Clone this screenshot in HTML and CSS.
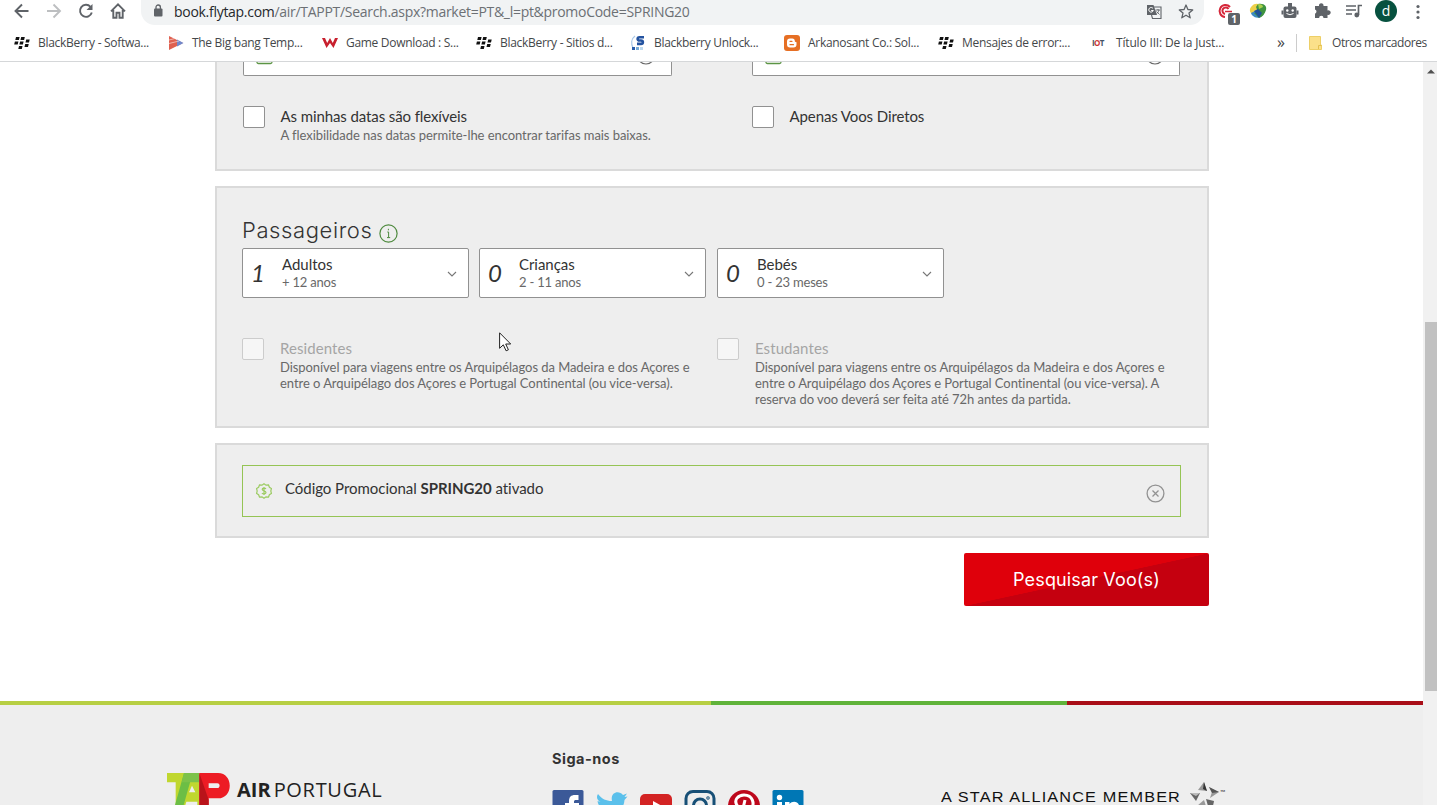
FILE: index.html
```html
<!DOCTYPE html>
<html lang="pt">
<head>
<meta charset="utf-8">
<title>TAP Air Portugal</title>
<link rel="stylesheet" href="styles.css">
</head>
<body>
<svg width="0" height="0" class="defs">
  <symbol id="bb" viewBox="0 0 16 12"><path d="M2 0h3.600l-.7 3H1.300zM7.200 0h3.600l-.7 3H6.500zM.9 4.500h3.500l-.7 3H.2zM6.100 4.500h3.500l-.7 3H5.400zM12.200 2.400h3.500l-.7 3h-3.500zM5 9h3.500l-.7 3H4.300zM11.200 7h3.500l-.7 3h-3.500z" fill="#111"/></symbol>
  <symbol id="chev" viewBox="0 0 10 6"><path d="M1 1l4 4 4-4" fill="none" stroke="#777" stroke-width="1.100"/></symbol>
</svg>
<header class="chrome">
  <div class="toolbar">
    <svg class="nav" width="128" height="24" viewBox="0 0 128 24" fill="none" stroke="#5f6368" stroke-width="1.900">
      <path d="M29 11H16M22.500 4.500L16 11l6.500 6.500" transform="translate(-.5)"/>
      <path d="M47 11h13M53.500 4.500L60 11l-6.500 6.500" stroke="#bdbfc1"/>
      <path d="M90.500 6.800A6 6 0 1 0 91.800 12.500"/><path d="M92.500 4v6h-6z" fill="#5f6368" stroke="none"/>
      <path d="M111 11.300l7-7 7 7M113.300 10v7.700h3.200v-5h3v5h3.200V10"/>
    </svg>
    <div class="omnibox">
      <svg class="lock" width="10" height="13" viewBox="0 0 10 13"><rect x="1" y="4.500" width="8.500" height="8" rx="1" fill="#5f6368"/><path d="M3 5V3.200a2.200 2.200 0 0 1 4.400 0V5" fill="none" stroke="#5f6368" stroke-width="1.300"/></svg>
      <span class="url"><b>book.flytap.com</b>/air/TAPPT/Search.aspx?market=PT&amp;_l=pt&amp;promoCode=SPRING20</span>
      <svg class="boxicons" width="48" height="18" viewBox="0 0 48 18">
        <path d="M1 3h6.500l3.500 10H1z" fill="#5f6368"/><path d="M8 5h7v11.500H6.500L5.500 13" fill="none" stroke="#5f6368" stroke-width="1.100"/>
        <path d="M7 6.500A2.300 2.300 0 1 0 7.300 8.500H5.200" fill="none" stroke="#fff"/><path d="M9.500 8h4.500M12 7v1M13 8c-.5 2-1.500 3-2.500 3.800M10.500 9.500l3 3" fill="none" stroke="#5f6368" stroke-width=".9"/>
        <path d="M40 3l1.900 4.500 4.800.4-3.700 3.200 1.200 4.700-4.200-2.600-4.200 2.600 1.200-4.700-3.700-3.200 4.800-.4z" fill="none" stroke="#5f6368" stroke-width="1.300" stroke-linejoin="round"/>
      </svg>
    </div>
    <div class="extensions">
      <div class="ext"><svg width="18" height="18" viewBox="0 0 18 18" fill="none" stroke="#d5273a" stroke-width="2"><path d="M13 5A6 6 0 1 0 8 15M11.500 7A3.300 3.300 0 1 0 8 12"/><path d="M8 9.500h7" stroke-width="1.500"/></svg><span class="count">1</span></div>
      <svg width="18" height="18" viewBox="0 0 18 18"><circle cx="8.500" cy="9" r="6.800" fill="#3a8ac2"/><path d="M3 4c3-4 9-2 9 1L8 8l-6 3C0 8 1 6 3 4z" fill="#eed04a"/><path d="M9 2c7-1 9 3 8 6-1 4-4 7-7 8l-5-5 4-1-2-5z" fill="#3f9340"/><path d="M5 9l4-2 4 4-3 5z" fill="#225398"/><path d="M9 2c3 0 5 1 5 3l-4 2z" fill="#a9cf4b"/></svg>
      <svg width="18" height="18" viewBox="0 0 18 18"><path d="M9 1v4" stroke="#5f6368" stroke-width="4"/><rect x="2.500" y="4.500" width="13" height="11.500" rx="2" fill="#5f6368"/><path d="M1.500 8.500v4M16.500 8.500v4" stroke="#5f6368" stroke-width="2"/><circle cx="6.300" cy="8.500" r="1.200" fill="#fff"/><circle cx="11.700" cy="8.500" r="1.200" fill="#fff"/><path d="M5.500 11.500q3.500 2.500 7 0" stroke="#fff" fill="none"/></svg>
      <svg width="18" height="18" viewBox="0 0 18 18"><path d="M2 4h4a2.300 2.300 0 1 1 4.500 0h4v4.500a2.300 2.300 0 1 1 0 4.200V16h-4a2.200 2.200 0 0 0-4.400 0H2v-4.300a2.300 2.300 0 0 0 0-4.300z" fill="#5f6368"/></svg>
      <svg width="18" height="18" viewBox="0 0 18 18" fill="none" stroke="#5f6368" stroke-width="1.700"><path d="M1 4h10M1 8h10M1 12h6M17 3.500h-3.500V13"/><circle cx="11.800" cy="13" r="1.600" fill="#5f6368"/></svg>
      <span class="avatar">d</span>
      <svg width="4" height="16" viewBox="0 0 4 16" fill="#5f6368"><circle cx="2" cy="2.500" r="1.600"/><circle cx="2" cy="8" r="1.600"/><circle cx="2" cy="13.500" r="1.600"/></svg>
    </div>
  </div>
  <nav class="bookmarks">
    <a class="bm"><svg width="16" height="12"><use href="#bb"/></svg>BlackBerry - Softwa...</a>
    <a class="bm"><svg width="16" height="16" viewBox="0 0 16 16"><path d="M1 1l14 7-14 7z" fill="#df6050"/><path d="M9 4.500l6.500 3.500L9 11.500z" fill="#7089cc"/><path d="M1 5l6-1.500M1 8.500L11 6" stroke="#fbd9d2" stroke-width=".7"/></svg>The Big bang Temp...</a>
    <a class="bm"><svg width="16" height="12" viewBox="0 0 16 12"><path d="M0 1h3l2.200 5L8 1l2.800 5L13 1h3l-4.500 10L8 6l-3.500 5z" fill="#c8202e"/></svg>Game Download : S...</a>
    <a class="bm"><svg width="16" height="12"><use href="#bb"/></svg>BlackBerry - Sitios d...</a>
    <a class="bm"><svg width="16" height="16" viewBox="0 0 16 16"><path d="M5 1C1 4 1 9 3 13" fill="none" stroke="#a9c8e8" stroke-width="1.300"/><path d="M14 2.300H9.500c-2.500 0-2.500 3.200 0 3.200h1.500c2.500 0 2.500 3.400 0 3.400H7" fill="none" stroke="#2453a0" stroke-width="2.600"/><path d="M2 12h3v3H2z" fill="#285caa"/><path d="M6 12h3v3H6z" fill="#75aad8"/><path d="M10 12h3v3h-3z" fill="#bedaf0"/></svg>Blackberry Unlock...</a>
    <a class="bm"><svg width="16" height="16" viewBox="0 0 16 16"><rect width="16" height="16" rx="3" fill="#e66f24"/><path d="M6 3.500h2.300a2.500 2.500 0 0 1 2.500 2.500c0 .9.300 1 1.700 1.200v2.300a3 3 0 0 1-3 3H6a3 3 0 0 1-3-3v-3a3 3 0 0 1 3-3z" fill="#fff"/><path d="M6 6.300h2M6 9.700h3.500" stroke="#e66f24" stroke-width="1.200" stroke-linecap="round"/></svg>Arkanosant Co.: Sol...</a>
    <a class="bm"><svg width="16" height="12"><use href="#bb"/></svg>Mensajes de error:...</a>
    <a class="bm last"><span class="iot"><i>I</i>O<i>T</i></span>Título III: De la Just...</a>
    <span class="more">»</span>
    <a class="bm others"><svg width="13" height="14" viewBox="0 0 13 14"><path d="M.5.500h11V9h1v4.500H.5z" fill="#fbe08a" stroke="#edcf67"/><path d="M9.500 13V9.500h3" fill="none" stroke="#e5c04f"/></svg>Otros marcadores</a>
  </nav>
</header>
<div class="window">
  <div class="page">
    <main class="form">
      <section class="panel dates">
        <div class="fields">
          <div class="field"><svg width="18" height="4" viewBox="0 0 18 4"><path d="M1-4V0q0 1.500 1.500 1.500h12q1.500 0 1.500-1.500V-4" fill="none" stroke="#5b9444" stroke-width="1.300"/></svg><svg width="18" height="4" viewBox="0 0 18 4"><circle cx="9" cy="-6.500" r="8.500" fill="none" stroke="#666" stroke-width="1.200"/></svg></div>
          <div class="field second"><svg width="18" height="4" viewBox="0 0 18 4"><path d="M1-4V0q0 1.500 1.500 1.500h12q1.500 0 1.500-1.500V-4" fill="none" stroke="#5b9444" stroke-width="1.300"/></svg><svg width="18" height="4" viewBox="0 0 18 4"><circle cx="9" cy="-6.500" r="8.500" fill="none" stroke="#666" stroke-width="1.200"/></svg></div>
        </div>
        <div class="options">
          <div class="option"><span class="box"></span><div><p class="name">As minhas datas são flexíveis</p><p class="hint">A flexibilidade nas datas permite-lhe encontrar tarifas mais baixas.</p></div></div>
          <div class="option"><span class="box"></span><p class="name">Apenas Voos Diretos</p></div>
        </div>
      </section>
      <section class="panel passengers">
        <h2><span>Passageiros</span><svg width="19" height="19" viewBox="0 0 19 19"><circle cx="9.500" cy="9.500" r="8.600" fill="none" stroke="#4e8a3e" stroke-width="1.200"/><path d="M8.300 8h1.300v5.500M8 13.600h3.200M9.400 4.800v1.500" fill="none" stroke="#4e8a3e" stroke-width="1"/></svg></h2>
        <div class="selects">
          <div class="select"><em>1</em><div><p class="name">Adultos</p><p class="hint">+ 12 anos</p></div><svg width="10" height="6"><use href="#chev"/></svg></div>
          <div class="select"><em>0</em><div><p class="name">Crianças</p><p class="hint">2 - 11 anos</p></div><svg width="10" height="6"><use href="#chev"/></svg></div>
          <div class="select third"><em>0</em><div><p class="name">Bebés</p><p class="hint">0 - 23 meses</p></div><svg width="10" height="6"><use href="#chev"/></svg></div>
        </div>
        <div class="options disabled">
          <div class="option"><span class="box"></span><div><p class="name">Residentes</p><p class="hint">Disponível para viagens entre os Arquipélagos da Madeira e dos Açores e<br>entre o Arquipélago dos Açores e Portugal Continental (ou vice-versa).</p></div></div>
          <div class="option"><span class="box"></span><div><p class="name">Estudantes</p><p class="hint">Disponível para viagens entre os Arquipélagos da Madeira e dos Açores e<br>entre o Arquipélago dos Açores e Portugal Continental (ou vice-versa). A<br>reserva do voo deverá ser feita até 72h antes da partida.</p></div></div>
        </div>
      </section>
      <section class="panel promo">
        <div class="code">
          <svg class="badge" width="16" height="16" viewBox="0 0 16 16" fill="none" stroke="#9ccb62" stroke-width="1.200"><path d="M8 .8l2 1.400 2.500-.2.900 2.300 2 1.300L14.800 8l.6 2.400-2 1.300-.9 2.300-2.500-.2-2 1.400-2-1.400-2.500.2-.9-2.300-2-1.300L1.200 8 .6 5.600l2-1.300L3.500 2l2.500.2z"/><path d="M10 5.800C9 4.800 6.200 5 6.200 6.500S10 7.800 10 9.500 7 11.200 5.900 10.100M8 4v8"/></svg>
          <p>Código Promocional <strong>SPRING20</strong> ativado</p>
          <svg class="close" width="19" height="19" viewBox="0 0 19 19" fill="none" stroke="#929292" stroke-width="1.300"><circle cx="9.500" cy="9.500" r="8.400"/><path d="M6.500 6.500l6 6M12.500 6.500l-6 6"/></svg>
        </div>
      </section>
      <button class="search">Pesquisar Voo(s)</button>
    </main>
    <footer class="footer">
      <div class="brand">
        <svg width="63" height="32" viewBox="0 0 189 96"><path d="M0 0h54l-6 96H26V28H0z" fill="#c0d72f"/><path d="M72 0h25v96H42z" fill="#c0d72f"/><path d="M51 0h26L50 96H24z" fill="#6cbe45"/><path d="M51 0h46v28H44z" fill="#7cc24a"/><path d="M75 38l10 20H66zM58 86h33v10H55z" fill="#eee"/><path fill-rule="evenodd" d="M97 0h56c47 0 47 76 0 76h-28v20H97zM125 31v14h26c9 0 9-14 0-14z" fill="#ed1c24"/><path d="M97 0l28 80v16H97z" fill="#b9131a"/></svg>
        <span class="air"><b>AIR</b><span>PORTUGAL</span></span>
      </div>
      <div class="social">
        <h3>Siga-nos</h3>
        <div class="icons">
          <svg width="32" height="15" viewBox="0 0 32 15"><rect x=".5" width="31" height="31" rx="1.500" fill="#3b5998"/><path d="M17 31V18h-4v-5h4v-2c0-4 2-6 6-6h3.500v5H24c-1.500 0-2 .5-2 2v1h5v5h-5v13z" fill="#fff"/></svg>
          <svg width="32" height="15" viewBox="0 0 32 15"><path d="M2 4c4 5 8 7 14 7C14 2 23 0 27 5l4-1.500-2.500 3.500 3-.5-3 3.500C28 20 18 29 1 26c4 0 7-1 9-3-3 0-5-2-6-5h3c-4-1-5-4-5.500-7l3 1C1 10 0 7 2 4z" fill="#5bc0eb"/></svg>
          <svg width="32" height="15" viewBox="0 0 32 15"><rect y="4" width="32" height="23" rx="5" fill="#d32323"/><path d="M13 11l9 5-9 5z" fill="#fff"/></svg>
          <svg width="32" height="15" viewBox="0 0 32 15" fill="none" stroke="#174f76" stroke-width="3"><rect x="2" y="1.500" width="28" height="28" rx="7"/><circle cx="16" cy="15.500" r="6.500"/><circle cx="24" cy="8" r=".5" stroke-width="2.500"/></svg>
          <svg width="32" height="15" viewBox="0 0 32 15"><circle cx="16" cy="16" r="16" fill="#bd081c"/><path d="M11 18C3 9 12 5 16 5c9 0 11 9 7 14-3 4-7 1-7 1M17 10l-4 17" fill="none" stroke="#fff" stroke-width="3"/></svg>
          <svg width="32" height="15" viewBox="0 0 32 15"><rect x=".5" width="31" height="31" rx="1.500" fill="#0077b5"/><circle cx="7.500" cy="7.500" r="2.700" fill="#fff"/><path d="M5 12h5v15H5zM13 12h4.500v2c3-4 10-3 10 4v9h-5v-9c0-3-5-3-5 0v9H13z" fill="#fff"/></svg>
        </div>
      </div>
      <div class="alliance"><span>A STAR ALLIANCE MEMBER</span><svg width="30" height="24" viewBox="0 0 30 24"><path d="M14 0l3 9-9-1z" fill="#999"/><path d="M14 0l3 9-4-2z" fill="#333"/><path d="M19 5l10 5-9 6 2-6z" fill="#999"/><path d="M19 5l10 5-7 1z" fill="#555"/><path d="M0 11h10l-4 8z" fill="#666"/><path d="M0 11h10l-4 3z" fill="#bbb"/><path d="M16 17l8 2-1 5h-5z" fill="#666"/><path d="M14 18l-7 6h9z" fill="#999"/></svg><small>™</small></div>
    </footer>
    <svg class="pointer" width="13" height="20" viewBox="0 0 13 20"><path d="M.6.800v15.500l3.700-3.500 2.800 6 2.300-1-2.700-5.800h5z" fill="#fff" stroke="#222" stroke-width="1"/></svg>
  </div>
  <div class="scrollbar"><svg width="8" height="5" viewBox="0 0 8 5"><path d="M0 4.500l4-4 4 4z" fill="#505050"/></svg><div class="thumb"></div></div>
</div>
</body>
</html>
```

FILE: styles.css
```css
* { box-sizing: border-box; }
html, body { height: 100%; }
body { margin: 0; overflow: hidden; display: flex; flex-direction: column; background: #fff; font-family: Lato, sans-serif; font-variant-ligatures: none; color: #333; }
p, h2, h3 { margin: 0; font-weight: 400; }
svg { display: block; flex: none; overflow: hidden; }
.defs { position: absolute; }

.chrome { height: 62px; flex: none; border-bottom: 1px solid #d5d7d9; font-family: "Open Sans", "Noto Sans", sans-serif; }
.toolbar { display: flex; height: 25px; }
.nav { margin-right: 13px; }
.omnibox { width: 1063px; height: 25px; background: #f1f3f4; border-radius: 0 0 14px 14px; display: flex; padding: 0 10px 0 12px; }
.lock { margin: 4px 11px 0 0; }
.url { font-size: 14px; line-height: 23px; color: #6c7074; letter-spacing: -.29px; white-space: nowrap; flex: 1; }
.url b { font-weight: 400; color: #25282b; }
.boxicons { margin-top: 2px; }
.extensions { display: flex; align-items: flex-start; padding: 2px 0 0 13px; gap: 14px; }
.ext { position: relative; }
.count { position: absolute; left: 11px; top: 11px; width: 12px; height: 12px; border-radius: 2px; background: #5f6368; color: #fff; font-size: 10px; font-weight: 700; line-height: 12px; text-align: center; }
.avatar { width: 22px; height: 22px; margin: -2px 0 0 -2px; border-radius: 50%; background: #07513f; color: #fff; font-size: 14px; line-height: 21px; text-align: center; }
.extensions > svg:last-child { margin: 2px 0 0 5px; }
.bookmarks { display: flex; align-items: center; height: 36px; padding-left: 14px; }
.bm { width: 154px; flex: none; display: flex; align-items: center; gap: 8px; font-size: 12px; line-height: 16px; color: #44474a; letter-spacing: -.3px; white-space: nowrap; }
.bm.last { letter-spacing: -.17px; }
.iot { width: 16px; font-size: 8px; font-weight: 700; color: #c33; letter-spacing: -.6px; }
.iot i { font-style: normal; color: #456; }
.more { margin-left: 31px; width: 20px; height: 18px; border-right: 1px solid #ccc; font-size: 16px; line-height: 16px; color: #444; }
.bm.others { margin-left: 12px; width: 120px; gap: 10px; letter-spacing: -.42px; }

.window { flex: 1; display: flex; min-height: 0; }
.page { flex: 1; position: relative; display: flex; flex-direction: column; overflow: hidden; }
.form { width: 994px; margin-left: 215px; height: 639px; flex: none; display: flex; flex-direction: column; }
.panel { border: 2px solid #dadada; background: #eee; margin-bottom: 15px; flex: none; }
.dates { height: 109px; border-top: 0; padding-left: 26px; }
.fields { display: flex; gap: 80px; }
.field { width: 429px; height: 14px; border: 1px solid #919191; border-top: 0; border-radius: 0 0 2px 2px; background: #fff; display: flex; justify-content: space-between; padding: 0 16px 0 12px; }
.field.second { width: 428px; padding-right: 15px; }
.options { display: flex; }
.option { width: 509px; flex: none; display: flex; gap: 16px; }
.dates .option { gap: 15.500px; }
.dates .options { margin-top: 30px; }
.box { width: 22px; height: 22px; flex: none; border: 1px solid #919191; border-radius: 2px; background: #fff; }
.name { font-size: 15px; line-height: 21px; white-space: nowrap; letter-spacing: -.04px; }
.dates .name { letter-spacing: -.1px; }
.hint { font-size: 13px; line-height: 16px; color: #686868; white-space: nowrap; letter-spacing: -.06px; }
.passengers { height: 242px; padding: 27px 0 0 25px; }
h2 { display: flex; height: 33px; gap: 7px; font: 300 22px/31px Inter, sans-serif; letter-spacing: .6px; }
h2 svg { margin-top: 9px; }
.selects { display: flex; gap: 10px; }
.select { width: 227px; height: 50px; border: 1px solid #919191; border-radius: 2px; background: #fff; display: flex; align-items: center; padding: 0 11px 0 8px; }
.select.third { margin-left: 1px; }
.select em { width: 31px; font-size: 24px; line-height: 48px; }
.select div { flex: 1; padding-bottom: 2px; }
.select > svg { margin-top: 2px; }
.select .name { line-height: 19px; }
.select .hint { letter-spacing: -.2px; }
.passengers .options { margin-top: 40px; }
.passengers .option { width: 475px; }
.disabled .box { border-color: #ccc; background: #f6f6f6; }
.disabled .name { color: #a5a5a5; letter-spacing: .08px; }
.promo { height: 95px; padding: 20px 26px 0 25px; }
.code { height: 52px; border: 1px solid #95c454; display: flex; padding-left: 13px; }
.badge { margin-top: 17px; }
.code p { margin-left: 13px; flex: 1; font-size: 15px; line-height: 44px; letter-spacing: -.04px; }
.close { margin: 18px 15px 0 0; }
.search { align-self: flex-end; width: 245px; height: 53px; flex: none; border: 0; border-radius: 2px; background: linear-gradient(167.800deg, #df000b 50%, #c5000f 50.500%); color: #fff; font: 400 18px/53px Inter, sans-serif; letter-spacing: .14px; padding: 0; }
.footer { flex: 1; position: relative; display: flex; background: #eee; }
.footer::before { content: ""; position: absolute; left: 0; right: 0; top: 0; height: 4px; background: linear-gradient(90deg, #b7cf43 50%, #60b33a 50%, #60b33a 75%, #a90e18 75%); }
.brand { margin: 72px 0 0 167px; width: 384px; display: flex; gap: 7px; }
.air { display: flex; gap: 3px; font: 400 20px/34px "Open Sans", sans-serif; color: #222; }
.air span { letter-spacing: .7px; }
.social { width: 390px; padding-top: 48px; }
h3 { height: 41px; font: 700 14.500px/20px Inter, sans-serif; letter-spacing: .5px; padding-left: 1px; }
.icons { display: flex; gap: 12px; height: 15px; overflow: hidden; margin-left: .5px; }
.alliance { display: flex; padding-top: 81px; }
.alliance span { width: 249px; font: 400 14px/30px "Liberation Sans", sans-serif; letter-spacing: 1px; white-space: nowrap; color: #111; transform: scaleX(1.160); transform-origin: left; }
.alliance small { font-size: 7px; line-height: 20px; }
.pointer { position: absolute; left: 499px; top: 270px; }
.scrollbar { width: 14px; flex: none; background: #f1f1f1; display: flex; flex-direction: column; align-items: flex-end; padding-top: 7px; }
.scrollbar svg { margin-right: 2px; }
.thumb { width: 12px; height: 369px; margin-top: 248px; background: #c1c1c1; }
```
